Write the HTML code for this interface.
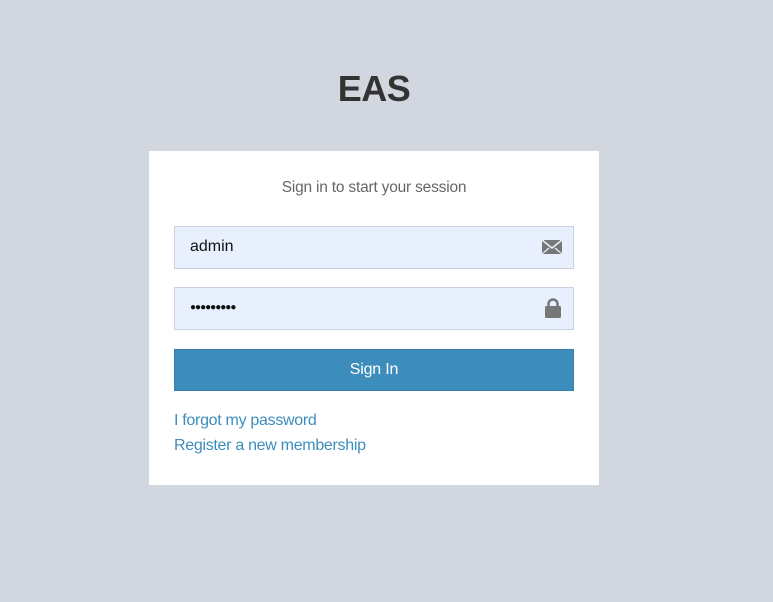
<!DOCTYPE html>
<html><head><style>
body{margin:0;background:#d2d6de;width:773px;height:602px;font-family:"Liberation Sans",sans-serif;position:relative;overflow:hidden}
.logo{position:absolute;top:68px;left:0;width:748px;text-align:center;font-size:36px;font-weight:bold;color:#333;letter-spacing:-0.5px}
.box{position:absolute;left:149px;top:151px;width:450px;height:334px;background:#fff}
.msg{position:absolute;top:28px;width:100%;text-align:center;font-size:15.5px;color:#666;letter-spacing:-0.2px}
.in{position:absolute;left:25px;width:398px;height:41px;background:#e8f0fe;border:1px solid #ccd3e0;font-size:16px;color:#111;line-height:40px;text-indent:15px}
.btn{position:absolute;left:25px;top:198px;width:398px;height:40px;background:#3c8dbc;border:1px solid #367fa9;color:#fff;font-size:16px;text-align:center;line-height:40px;letter-spacing:-0.2px}
.lk{position:absolute;left:25px;font-size:16px;color:#3c8dbc;letter-spacing:-0.3px}
svg{position:absolute;right:11px}
</style></head><body>
<div class="logo">EAS</div>
<div class="box">
<div class="msg">Sign in to start your session</div>
<div class="in" style="top:75px">admin<svg style="top:12px" width="20" height="16" viewBox="0 0 20 16"><path d="M0 1h20v14H0z" fill="#777"/><path d="M0 1l10 8 10-8" fill="none" stroke="#e8f0fe" stroke-width="1.5"/><path d="M0 15l7-6M20 15l-7-6" stroke="#e8f0fe" stroke-width="1.2"/></svg></div>
<div class="in" style="top:136px;font-size:10px;letter-spacing:-1px">●●●●●●●●●<svg style="top:10px" width="18" height="20" viewBox="0 0 18 20"><path d="M4.5 9V6a4.5 4.5 0 0 1 9 0v3" fill="none" stroke="#777" stroke-width="2.5"/><rect x="1" y="8" width="16" height="12" rx="1.5" fill="#777"/></svg></div>
<div class="btn">Sign In</div>
<div class="lk" style="top:261px">I forgot my password</div>
<div class="lk" style="top:286px">Register a new membership</div>
</div>
</body></html>
